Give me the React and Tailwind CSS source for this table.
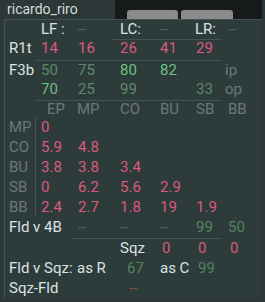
import React from 'react';

const pink = 'text-[#d95a7e]';
const green = 'text-[#6fbf84]';
const dim = 'text-[#5b8a6a]';
const gray = 'text-[#6b7878]';
const white = 'text-[#dbe2e2]';
const dash = 'text-[#4b6666]';
const dashG = 'text-[#4a6b58]';

// column widths after the 36px label: x = 41, 78, 120, 160, 196, 225
const widths = ['w-[37px]', 'w-[42px]', 'w-[40px]', 'w-[36px]', 'w-[29px]', 'flex-1'];

function Row({ h, label, labelColor = white, cells = [], grid = false }) {
  return (
    <div className={`flex items-center ${h}`}>
      {grid ? (
        <>
          <div className={`w-[31px] h-full flex items-center pl-[4px] border-r border-[#455353] ${labelColor}`}>{label}</div>
          <div className="w-[5px]" />
        </>
      ) : (
        <div className={`w-[36px] pl-[4px] whitespace-nowrap ${labelColor}`}>{label}</div>
      )}
      {widths.map((w, i) => {
        const c = cells[i];
        return (
          <div key={i} className={`${w} whitespace-nowrap`}>
            {c ? <span className={`${c[1]} ${c[2] || ''}`}>{c[0]}</span> : null}
          </div>
        );
      })}
    </div>
  );
}

function Line({ ml, w }) {
  return <div className={`h-px bg-[#455353] ${ml} ${w}`} />;
}

export default function App() {
  return (
    <div className="w-[265px] h-[302px] bg-[#2c3838] overflow-hidden text-[15px] leading-none" style={{ fontFamily: 'Roboto, "Noto Sans", sans-serif' }}>
      <div className="flex h-[19px]">
        <div className="w-[115px] pl-[7px] pt-[2px] text-[14px] text-[#d3dbdb]">ricardo_riro</div>
        <div className="w-[147px] bg-[#161a1a] flex items-end pl-[12px] gap-[3px]">
          <div className="w-[51px] h-[9px] bg-[#8b8b8b] rounded-t-[3px]" />
          <div className="w-[52px] h-[9px] bg-[#8b8b8b] rounded-t-[3px]" />
        </div>
      </div>
      <div className="ml-[4px] w-[258px] h-[279px] border-l border-t border-[#455353] bg-[#2e3b3b]">
        <Row h="h-[19px]" label="" cells={[['LF :', white], ['--', dash], ['LC:', white], ['--', dash], ['LR:', white, 'ml-[-1px]'], ['--', dash, 'pl-[3px]']]} />
        <Line ml="ml-[107px]" w="w-[110px]" />
        <Row h="h-[16px]" label="R1t" cells={[['14', pink], ['16', pink], ['26', pink], ['41', pink], ['29', pink]]} />
        <div className="h-[4px]" />
        <Line ml="ml-[31px]" w="w-[186px]" />
        <Row h="h-[18px]" label="F3b" cells={[['50', dim], ['75', dim], ['80', green], ['82', green], null, ['ip', gray]]} />
        <Row h="h-[21px]" label="" cells={[['70', green], ['25', dim], ['99', dim], null, ['33', dim], ['op', gray]]} />
        <Line ml="ml-[31px]" w="w-[186px]" />
        <Row h="h-[16px]" label="" cells={[['EP', gray, 'pl-[6px]'], ['MP', gray, 'ml-[-1px]'], ['CO', gray], ['BU', gray], ['SB', gray], ['BB', gray, 'pl-[3px]']]} />
        <Row grid h="h-[20px]" label="MP" labelColor={gray} cells={[['0', pink]]} />
        <Row grid h="h-[20px]" label="CO" labelColor={gray} cells={[['5.9', pink], ['4.8', pink]]} />
        <Row grid h="h-[20px]" label="BU" labelColor={gray} cells={[['3.8', pink], ['3.8', pink], ['3.4', pink]]} />
        <Row grid h="h-[20px]" label="SB" labelColor={gray} cells={[['0', pink], ['6.2', pink], ['5.6', pink], ['2.9', pink]]} />
        <Row grid h="h-[20px]" label="BB" labelColor={gray} cells={[['2.4', pink], ['2.7', pink], ['1.8', pink], ['19', pink], ['1.9', pink]]} />
        <div className="flex items-center h-[21px]">
          <div className={`w-[73px] pl-[4px] whitespace-nowrap ${white}`}>Fld v 4B</div>
          <div className="w-[42px]"><span className={dashG}>--</span></div>
          <div className="w-[40px]"><span className={dashG}>--</span></div>
          <div className="w-[36px]"><span className={dashG}>--</span></div>
          <div className="w-[29px]"><span className="text-[#52845f]">99</span></div>
          <div className="flex-1 pl-[3px]"><span className="text-[#52845f]">50</span></div>
        </div>
        <Line ml="ml-[67px]" w="w-[150px]" />
        <div className="flex items-center h-[19px]">
          <div className="w-[115px]" />
          <div className={`w-[42px] ${white}`}>Sqz</div>
          <div className={`w-[36px] ${pink}`}>0</div>
          <div className={`w-[32px] ${pink}`}>0</div>
          <div className={`flex-1 ${pink}`}>0</div>
        </div>
        <div className="flex items-center h-[20px]">
          <div className={`w-[72px] pl-[4px] whitespace-nowrap ${white}`}>Fld v Sqz:</div>
          <div className={`w-[50px] whitespace-nowrap ${white}`}>as R</div>
          <div className="w-[33px] text-[#52845f]">67</div>
          <div className={`w-[38px] whitespace-nowrap ${white}`}>as C</div>
          <div className="flex-1 text-[#52845f]">99</div>
        </div>
        <div className="flex items-center h-[20px]">
          <div className={`w-[124px] pl-[4px] whitespace-nowrap ${white}`}>Sqz-Fld</div>
          <div className="text-[#8a4a3e]">--</div>
        </div>
      </div>
    </div>
  );
}
